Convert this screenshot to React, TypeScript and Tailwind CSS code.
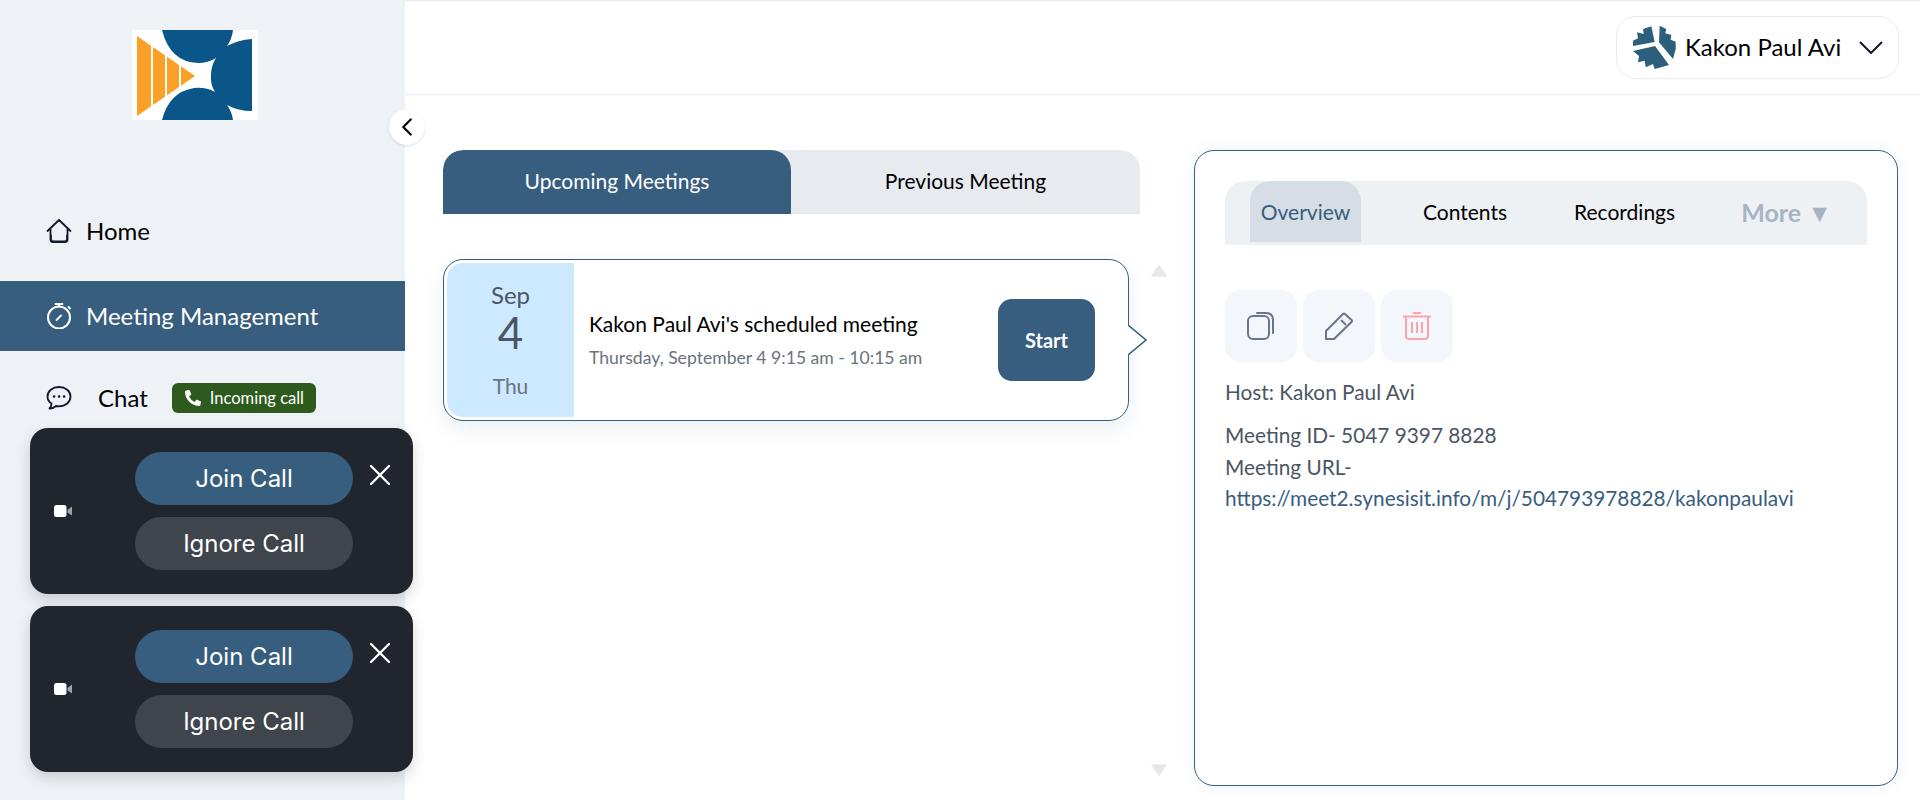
import { ChevronLeft, X } from "lucide-react";
import { FaPhoneAlt } from "react-icons/fa";

function Logo() {
  return <svg viewBox="0 0 126 90" className="h-[90px] w-[126px]">
    <rect width="126" height="90" fill="#ffffff" />
    <path d="M5 6 L19 15.7 V76.3 L5 86 Z M21 17 L33 25.3 V66.7 L21 75 Z M35 26.7 L47 35 V57 L35 65.3 Z M49 36.3 L63 46 L49 55.7 Z" fill="#fba026" />
    <path d="M30 0 H101 Q100 9 95 16 Q106 10 120 9 V81 Q106 81 95 75 Q100 82 101 90 H30 Q37 62 62 58 Q74 57 83 62 Q78 54 79 45 Q79 36 84 28 Q76 33 66 33 Q38 32 30 0 Z" fill="#0a5688" />
  </svg>;
}

function Avatar() {
  return <svg viewBox="0 0 44 44" className="h-[44px] w-[44px]" fill="#2c5f7c">
    <path d="M22.7 17 L19.3 1.3 L11 4 L11.7 9 L5 7.3 L6 13.3 L1 15.7 L1 21 Z" />
    <path d="M27 17.3 L27.7 0.7 L34.3 4 L33.3 8.3 L39.3 10 L38.7 14.7 L43.7 16.7 L43.7 24 L41 34 Z" />
    <path d="M23 21 L37 40 L30 42 L22.7 44 L21 39 L13.7 42.3 L12.7 35.7 L6 37.3 L7 31 L1 26 Z" />
  </svg>;
}

function NavIcon({ name, color }: { name: "home" | "timer" | "chat"; color: string }) {
  return <svg viewBox="0 0 26 26" fill="none" stroke={color} strokeWidth="1.8" strokeLinecap="round" strokeLinejoin="round" className="h-[26px] w-[26px] shrink-0">
    {name === "home" && <path d="M1.5 13 L13 2 L24.5 13 M4.5 11 V21.5 Q4.5 24 7 24 H19 Q21.5 24 21.5 21.5 V11 M5 17.5 V21 Q5 23.5 7.5 23.5 H18.5 Q21 23.5 21 21 V17.5" />}
    {name === "timer" && <>
      <circle cx="13" cy="14.5" r="11" strokeWidth="2" />
      <path d="M9.5 1 H16.5 M13 1 V3.5 M22.5 4 L24 5.5 M10.5 17 L15 12.5" />
    </>}
    {name === "chat" && <>
      <path d="M13 2 C6.5 2 1.5 6 1.5 11.5 C1.5 14.5 3 17 5.5 18.5 C5.5 20.5 5 22 3.5 23.5 C6.5 23.5 8.5 22.5 10 21 C11 21.2 12 21.3 13 21.3 C19.5 21.3 24.5 17 24.5 11.5 C24.5 6 19.5 2 13 2 Z" />
      <path d="M8 11.5 H8.2 M13 11.5 H13.2 M18 11.5 H18.2" strokeWidth="2.4" />
    </>}
  </svg>;
}

function CallToast() {
  return <div className="flex h-[166px] w-[383px] items-center rounded-[18px] bg-[#21252d] pl-[24px] shadow-[0_6px_14px_rgba(31,41,55,0.18)] font-['Inter',sans-serif]">
    <svg viewBox="0 0 18 12" className="h-[12px] w-[18px] shrink-0">
      <rect width="12.5" height="12" rx="2.5" fill="#ffffff" />
      <path d="M13.5 5 L18 1.5 V10.5 L13.5 7.5 Z" fill="#9ca3af" />
    </svg>
    <div className="ml-[63px] flex w-[218px] flex-col gap-[12px]">
      <button className="h-[53px] rounded-full bg-[#375d7f] text-[24px] text-white">Join Call</button>
      <button className="h-[53px] rounded-full bg-[#40444d] text-[24px] text-white">Ignore Call</button>
    </div>
    <X className="mb-[72px] ml-[9px] h-[36px] w-[36px] text-white" strokeWidth={1.5} />
  </div>;
}

function Sidebar() {
  return <aside className="relative flex w-[405px] shrink-0 flex-col bg-[#eef2f6] text-[24px] text-black">
    <div className="ml-[132px] mt-[30px] h-[90px]"><Logo /></div>
    <button className="absolute left-[389px] top-[109px] z-10 flex h-[36px] w-[36px] items-center justify-center rounded-full bg-white shadow-sm">
      <ChevronLeft className="h-[30px] w-[30px] text-black" strokeWidth={1.8} />
    </button>
    <div className="mt-[81px] flex h-[60px] items-center gap-[14px] pl-[46px]">
      <NavIcon name="home" color="#111827" />
      <span>Home</span>
    </div>
    <div className="mt-[20px] flex h-[70px] items-center gap-[14px] bg-[#375d7f] pl-[46px] text-white">
      <NavIcon name="timer" color="#ffffff" />
      <span>Meeting Management</span>
    </div>
    <div className="mt-[17px] flex h-[60px] items-center pl-[46px]">
      <NavIcon name="chat" color="#111827" />
      <span className="ml-[26px]">Chat</span>
      <span className="ml-[24px] flex h-[30px] w-[144px] items-center gap-[9px] rounded-[6px] bg-[#2f5a1e] pl-[13px] text-[16.5px] text-white">
        <FaPhoneAlt className="h-[16px] w-[16px]" />
        Incoming call
      </span>
    </div>
    <div className="relative z-10 ml-[30px] flex w-[383px] flex-col gap-[12px]">
      <CallToast />
      <CallToast />
    </div>
  </aside>;
}

function Header() {
  return <header className="flex h-[95px] items-center justify-end border-y border-[#e9ecef] pr-[21px]">
    <div className="mt-[-1px] flex h-[63px] w-[283px] items-center rounded-[20px] border border-[#e8ebee] pl-[15px] text-[24px] text-black">
      <Avatar />
      <span className="ml-[9px]">Kakon Paul Avi</span>
      <svg viewBox="0 0 24 13" fill="none" stroke="#111827" strokeWidth="2" className="ml-[18px] h-[13px] w-[24px]"><path d="M1 1 L12 12 L23 1" /></svg>
    </div>
  </header>;
}

function MeetingList() {
  return <section className="w-[697px] shrink-0">
    <div className="flex h-[64px] overflow-hidden rounded-t-[20px] bg-[#e7ebef] text-[21px]">
      <div className="flex w-[348px] items-center justify-center rounded-t-[20px] bg-[#375d7f] pb-[2px] text-white">Upcoming Meetings</div>
      <div className="flex flex-1 items-center justify-center pb-[2px] text-black">Previous Meeting</div>
    </div>
    <div className="relative mt-[45px] flex h-[162px] w-[686px] items-center rounded-[20px] border border-[#375d7f] bg-white pl-[3px] shadow-[0_8px_20px_rgba(55,93,127,0.1)]">
      <div className="flex h-[154px] w-[127px] flex-col items-center justify-center rounded-l-[16px] bg-[#cde9ff]">
        <span className="text-[24px] leading-[26px] text-[#4b5563]">Sep</span>
        <span className="text-[44px] leading-[48px] text-[#4b5563]">4</span>
        <span className="mt-[17px] text-[21px] leading-[26px] text-[#6b7280]">Thu</span>
      </div>
      <div className="ml-[15px] flex flex-1 flex-col">
        <span className="text-[21px] leading-[28px] text-black">Kakon Paul Avi's scheduled meeting</span>
        <span className="mt-[8px] text-[17.6px] leading-[24px] text-[#6b7280]">Thursday, September 4 9:15 am - 10:15 am</span>
      </div>
      <button className="mr-[33px] h-[82px] w-[97px] rounded-[14px] bg-[#375d7f] text-[20px] font-bold text-white">Start</button>
      <svg viewBox="0 0 20 32" className="absolute left-[684px] top-[64px] h-[32px] w-[20px]">
        <path d="M0 1 L18 16 L0 31" fill="#ffffff" stroke="#375d7f" strokeWidth="1.6" />
      </svg>
    </div>
  </section>;
}

function Scroller() {
  return <div className="flex h-[636px] w-[54px] shrink-0 flex-col items-center justify-between pb-[10px] pr-[17px] pt-[115px]">
    <svg viewBox="0 0 16 12" className="h-[12px] w-[16px]"><path d="M8 1 L15 11 H1 Z" fill="#e5e7eb" stroke="#e5e7eb" strokeWidth="1.5" strokeLinejoin="round" /></svg>
    <svg viewBox="0 0 16 12" className="h-[12px] w-[16px]"><path d="M1 1 H15 L8 11 Z" fill="#e5e7eb" stroke="#e5e7eb" strokeWidth="1.5" strokeLinejoin="round" /></svg>
  </div>;
}

function DetailPanel() {
  return <section className="h-[636px] w-[704px] shrink-0 rounded-[20px] border border-[#375d7f] bg-white px-[30px] pt-[30px] shadow-[0_0_16px_rgba(55,93,127,0.08)]">
    <div className="flex h-[64px] items-start rounded-t-[20px] bg-[#eef1f4] pl-[25px] text-[21px]">
      <div className="flex h-[61px] w-[111px] items-center justify-center rounded-t-[20px] bg-[#d6dde4] text-[#375d7f]">Overview</div>
      <div className="ml-[62px] flex h-[61px] items-center text-black">Contents</div>
      <div className="ml-[67px] flex h-[61px] items-center text-black">Recordings</div>
      <div className="ml-[66px] flex h-[64px] items-center text-[25px] font-bold text-[#a8b3c4]">More ▼</div>
    </div>
    <div className="mt-[45px] flex gap-[6px]">
      <div className="flex h-[72px] w-[72px] items-center justify-center rounded-[16px] bg-[#f3f6fa]">
        <svg viewBox="0 0 28 28" fill="none" stroke="#6b7489" strokeWidth="2" className="h-[28px] w-[28px]">
          <rect x="1" y="4" width="21" height="23" rx="5" />
          <path d="M10 1 H19 Q26 1 26 8 V21" strokeLinecap="round" />
        </svg>
      </div>
      <div className="flex h-[72px] w-[72px] items-center justify-center rounded-[16px] bg-[#f3f6fa]">
        <svg viewBox="0 0 28 28" fill="none" stroke="#6b7489" strokeWidth="2" className="h-[28px] w-[28px]">
          <path d="M1 27 V19 L18 2 Q19 1 20 2 L26.5 8 Q27.5 9 26.5 10 L9 27 Z M16 8 L21 13" strokeLinejoin="round" />
        </svg>
      </div>
      <div className="flex h-[72px] w-[72px] items-center justify-center rounded-[16px] bg-[#f3f6fa]">
        <svg viewBox="0 0 28 28" fill="none" stroke="#fda4a8" strokeWidth="2" className="h-[28px] w-[28px]">
          <path d="M10 1 H18 M0 4.5 H28 M3 5 V24 Q3 27 6 27 H22 Q25 27 25 24 V5 M9 10 V21 M14 10 V21 M19 10 V21" />
        </svg>
      </div>
    </div>
    <p className="mt-[17px] text-[20.8px] leading-[26px] text-[#4b5563]">Host: Kakon Paul Avi</p>
    <p className="mt-[14px] text-[20.8px] leading-[32px] text-[#4b5563]">Meeting ID- 5047 9397 8828</p>
    <p className="text-[20.8px] leading-[31px] text-[#4b5563]">Meeting URL-</p>
    <p className="text-[20.8px] leading-[32px] text-[#375d7f]">https://meet2.synesisit.info/m/j/504793978828/kakonpaulavi</p>
  </section>;
}

export default function App() {
  return <div className="flex h-[800px] w-[1920px] overflow-hidden bg-white font-['Lato',sans-serif]">
    <Sidebar />
    <main className="flex-1">
      <Header />
      <div className="flex pl-[38px] pt-[55px]">
        <MeetingList />
        <Scroller />
        <DetailPanel />
      </div>
    </main>
  </div>;
}
